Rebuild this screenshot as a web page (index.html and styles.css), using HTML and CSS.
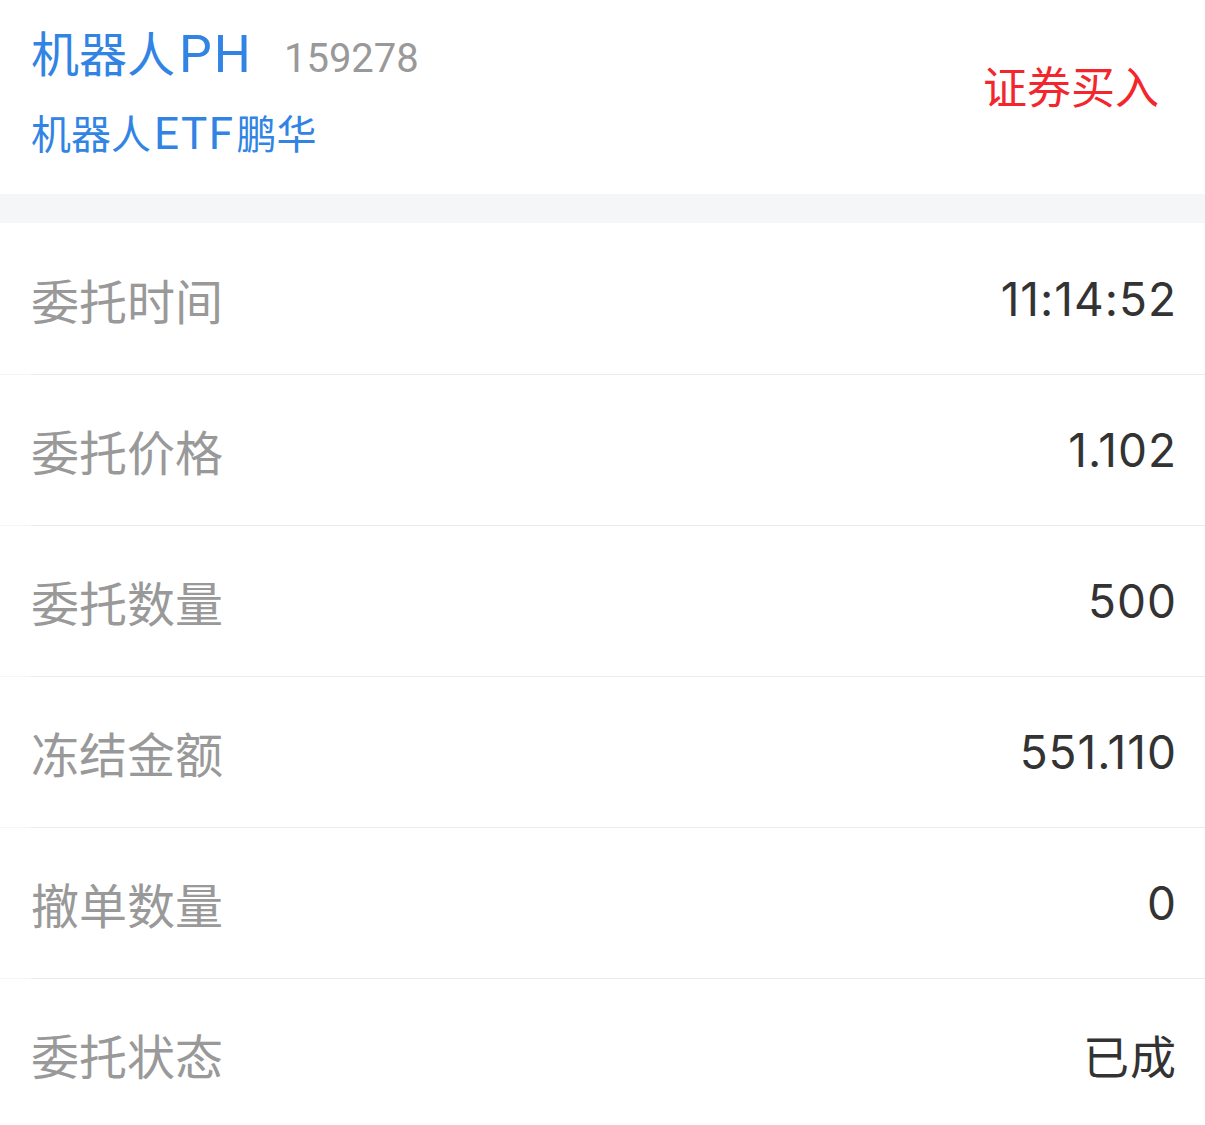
FILE: index.html
```html
<!DOCTYPE html>
<html lang="zh-CN">
<head>
<meta charset="utf-8">
<title>委托详情</title>
<link rel="stylesheet" href="styles.css">
</head>
<body>
<div class="page">
  <header class="stock">
    <div class="stock-info">
      <div class="stock-title">
        <span class="stock-name">机器人<span class="latin">PH</span></span>
        <span class="stock-code">159278</span>
      </div>
      <div class="stock-full">机器人<span class="latin">ETF</span>鹏华</div>
    </div>
    <div class="trade-type">证券买入</div>
  </header>
  <div class="gap"></div>
  <ul class="detail">
    <li class="row"><span class="label">委托时间</span><span class="value">11:14:52</span></li>
    <li class="row"><span class="label">委托价格</span><span class="value">1.102</span></li>
    <li class="row"><span class="label">委托数量</span><span class="value">500</span></li>
    <li class="row"><span class="label">冻结金额</span><span class="value">551.110</span></li>
    <li class="row"><span class="label">撤单数量</span><span class="value">0</span></li>
    <li class="row"><span class="label">委托状态</span><span class="value">已成</span></li>
  </ul>
</div>
</body>
</html>
```

FILE: styles.css
```css
* {
  box-sizing: border-box;
}

html, body {
  margin: 0;
  padding: 0;
  background: #ffffff;
}

body {
  font-family: "Noto Sans CJK SC", sans-serif;
}

.page {
  width: 1205px;
}

/* stock header */
.stock {
  height: 194px;
  display: flex;
  align-items: flex-start;
  justify-content: space-between;
  padding: 0 46px 0 31px;
}

.stock-info {
  display: flex;
  flex-direction: column;
}

.stock-title {
  display: flex;
  align-items: baseline;
  padding-top: 22px;
  line-height: 58px;
}

.stock-name {
  font-size: 48px;
  color: #3184e4;
}

.latin {
  font-family: Roboto, sans-serif;
}

.stock-name .latin {
  font-size: 52px;
  letter-spacing: 2px;
  margin-left: 4px;
}

.stock-code {
  font-family: Roboto, sans-serif;
  font-size: 40px;
  color: #999999;
  margin-left: 31px;
}

.stock-full {
  font-size: 40px;
  line-height: 50px;
  margin-top: 19px;
  color: #3184e4;
}

.stock-full .latin {
  font-size: 44px;
  letter-spacing: 1.5px;
  margin: 0 2px 0 3px;
}

.trade-type {
  font-size: 44px;
  line-height: 56px;
  margin-top: 57px;
  color: #f2262c;
}

.gap {
  height: 29px;
  background: #f5f6f8;
}

/* detail rows */
.detail {
  list-style: none;
  margin: 0;
  padding: 0;
}

.row {
  height: 151px;
  display: flex;
  align-items: center;
  justify-content: space-between;
  padding: 0 28px 0 31px;
  position: relative;
}

.row + .row::before {
  content: "";
  position: absolute;
  left: 0;
  right: 0;
  top: 0;
  height: 1px;
  background: linear-gradient(to right, #f6f6f6 0, #f6f6f6 31px, #ebebeb 31px);
}

.label {
  font-size: 48px;
  color: #999999;
}

.value {
  font-family: Inter, "Noto Sans CJK SC", sans-serif;
  font-size: 46px;
  letter-spacing: 1px;
  color: #333333;
}
```
